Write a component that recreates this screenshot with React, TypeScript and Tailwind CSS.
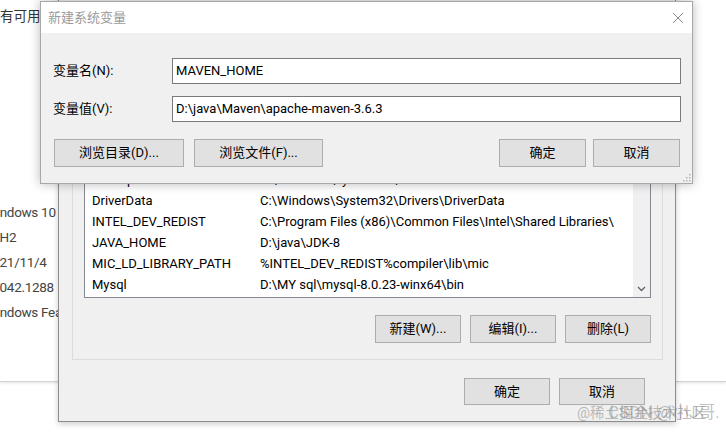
import React from 'react';

const font = "font-['Roboto','Noto_Sans_CJK_SC',sans-serif]";

const rows: [string, string][] = [
  ['asl.log', 'Destination=file'],
  ['ComSpec', 'C:\\Windows\\system32\\cmd.exe'],
  ['DriverData', 'C:\\Windows\\System32\\Drivers\\DriverData'],
  ['INTEL_DEV_REDIST', 'C:\\Program Files (x86)\\Common Files\\Intel\\Shared Libraries\\'],
  ['JAVA_HOME', 'D:\\java\\JDK-8'],
  ['MIC_LD_LIBRARY_PATH', '%INTEL_DEV_REDIST%compiler\\lib\\mic'],
  ['Mysql', 'D:\\MY sql\\mysql-8.0.23-winx64\\bin'],
];

const specs = ['Windows 10 专业版', '21H2', '2021/11/4', '19042.1288', 'Windows Feature Experience Pack 120.2212.3920.0'];

function WinButton({ label, w, h = 'h-[28px]' }: { label: string; w: string; h?: string }) {
  return (
    <div className={`${w} ${h} flex items-center justify-center border border-[#adadad] bg-[#e1e1e1] text-[13px] text-black`}>
      {label}
    </div>
  );
}

function TextBox({ value }: { value: string }) {
  return (
    <div className="flex h-[26px] flex-1 items-center border border-[#7a7a7a] bg-white px-[3px] text-[13px] text-black">
      {value}
    </div>
  );
}

export default function App() {
  return (
    <div className={`relative h-[432px] w-[726px] overflow-hidden bg-white ${font}`}>
      {/* settings page behind everything */}
      <div className="h-[382px] w-full border-b border-[#d4d4d4] bg-white shadow-[0_1px_3px_rgba(0,0,0,0.12)]">
        <div className="h-[32px] text-[13.5px] leading-[32px] text-[#333]">有可用更新</div>
        <div className="mt-[168px] -ml-[15px] flex flex-col text-[13.5px] leading-[25px] tracking-[-0.3px] text-[#444]">
          {specs.map((s) => (
            <div key={s} className="whitespace-nowrap">
              {s}
            </div>
          ))}
        </div>
      </div>

      {/* 环境变量 dialog */}
      <div className="absolute left-[58px] top-[-40px] flex h-[462px] w-[618px] flex-col justify-end border border-[#8c8c8c] bg-[#f0f0f0] shadow-[0_2px_6px_rgba(0,0,0,0.2)]">
        <div className="ml-[13px] mr-[12px] flex flex-col border border-[#dcdcdc] px-[11px] pb-[16px]">
          <div className="flex h-[240px] overflow-hidden border border-[#828790] bg-white">
            <div className="flex flex-1 flex-col justify-end overflow-hidden pb-[2px]">
              {rows.map(([k, v]) => (
                <div key={k} className="flex h-[21px] shrink-0 items-center whitespace-nowrap text-[13px] text-black">
                  <div className="w-[175px] shrink-0 pl-[7px]">{k}</div>
                  <div>{v}</div>
                </div>
              ))}
            </div>
            <div className="flex w-[17px] flex-col justify-end bg-[#f0f0f0]">
              <div className="flex h-[17px] items-center justify-center">
                <svg width="9" height="6" viewBox="0 0 9 6">
                  <polyline points="1,1 4.5,4.5 8,1" fill="none" stroke="#606060" strokeWidth="1.3" />
                </svg>
              </div>
            </div>
          </div>
          <div className="mt-[17px] flex justify-end gap-[9px]">
            <WinButton label="新建(W)..." w="w-[86px]" />
            <WinButton label="编辑(I)..." w="w-[86px]" />
            <WinButton label="删除(L)" w="w-[86px]" />
          </div>
        </div>
        <div className="mr-[30px] mt-[18px] mb-[16px] flex justify-end gap-[9px]">
          <WinButton label="确定" w="w-[86px]" h="h-[27px]" />
          <WinButton label="取消" w="w-[86px]" h="h-[27px]" />
        </div>
      </div>

      {/* 新建系统变量 dialog */}
      <div className="absolute left-[40px] top-[1px] flex h-[183px] w-[653px] flex-col border border-[#a8a8a8] bg-[#f0f0f0] shadow-[0_0_10px_rgba(0,0,0,0.28)]">
        <div className="flex h-[31px] items-center justify-between bg-white pl-[7px] pr-[8px]">
          <span className="text-[13px] text-[#9a9a9a]">新建系统变量</span>
          <svg width="12" height="12" viewBox="0 0 12 12">
            <path d="M1 1 L11 11 M11 1 L1 11" stroke="#8a8a8a" strokeWidth="1" />
          </svg>
        </div>
        <div className="flex flex-1 flex-col pl-[12px] pr-[11px] pt-[25px]">
          <div className="flex items-center">
            <div className="w-[119px] text-[13px] text-black">变量名(N):</div>
            <TextBox value="MAVEN_HOME" />
          </div>
          <div className="mt-[12px] flex items-center">
            <div className="w-[119px] text-[13px] text-black">变量值(V):</div>
            <TextBox value="D:\java\Maven\apache-maven-3.6.3" />
          </div>
          <div className="mt-[17px] flex items-center pl-[1px] pr-[1px]">
            <div className="flex gap-[10px]">
              <WinButton label="浏览目录(D)..." w="w-[130px]" />
              <WinButton label="浏览文件(F)..." w="w-[129px]" />
            </div>
            <div className="ml-auto flex gap-[7px]">
              <WinButton label="确定" w="w-[87px]" />
              <WinButton label="取消" w="w-[87px]" />
            </div>
          </div>
        </div>
        {/* size grip */}
        <svg className="absolute bottom-[1px] right-[1px]" width="9" height="9" viewBox="0 0 9 9">
          {[
            [7, 1],
            [7, 4],
            [4, 4],
            [7, 7],
            [4, 7],
            [1, 7],
          ].map(([x, y]) => (
            <rect key={`${x}-${y}`} x={x} y={y} width="1.5" height="1.5" fill="#b5b5b5" />
          ))}
        </svg>
      </div>

      {/* watermark */}
      <div className="absolute left-[577px] top-[403px] whitespace-nowrap text-[14.5px] text-[rgba(150,150,150,0.65)]">
        @稀土掘金技术社区
      </div>
      <div className="absolute left-[608px] top-[400px] whitespace-nowrap text-[17px] text-[rgba(120,120,120,0.45)]">
        CSDN @小J哥.
      </div>
    </div>
  );
}
